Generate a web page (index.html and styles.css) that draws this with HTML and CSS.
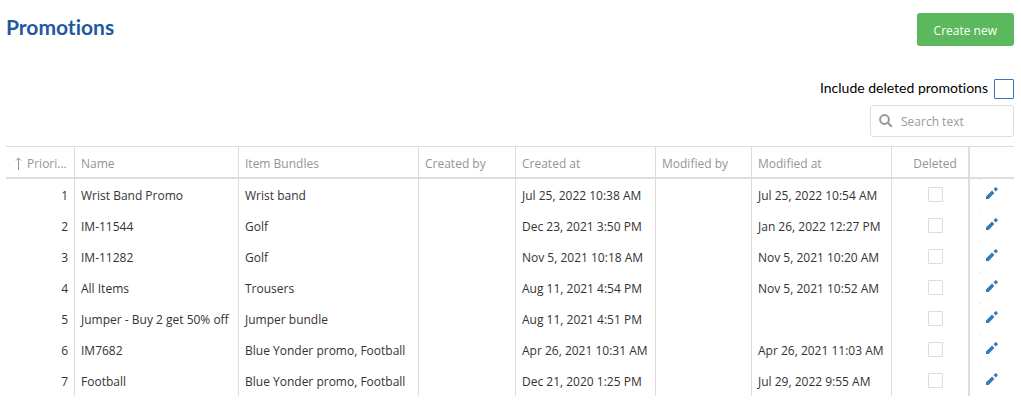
FILE: index.html
```html
<!DOCTYPE html>
<html lang="en">
<head>
    <meta charset="UTF-8">
    <meta name="viewport" content="width=device-width, initial-scale=1.0">
    <title>Promotions</title>
    <link rel="stylesheet" href="styles.css">
</head>
<body>
    <!-- Shared icons -->
    <svg class="icon-defs" width="0" height="0" aria-hidden="true">
        <symbol id="pencil" viewBox="0 0 12 12">
            <path d="M0 12V9.4L6 3.6L8.4 6L2.6 12Z M7.6 2.2L9.4 0.3Q9.8 0 10.2 0.3L11.7 1.8Q12 2.2 11.7 2.6L9.8 4.4Z"/>
        </symbol>
    </svg>

    <div class="header">
        <h1>Promotions</h1>
        <button class="button" type="button">Create new</button>
    </div>

    <div class="toolbar">
        <label class="include-deleted">
            Include deleted promotions
            <input type="checkbox" class="filter-checkbox">
        </label>
        <div class="search-box">
            <svg class="search-icon" viewBox="0 0 14 14" aria-hidden="true">
                <circle cx="5.5" cy="5.5" r="4.4"/>
                <path d="M8.8 8.8L12.8 12.8"/>
            </svg>
            <input type="text" class="search-input" placeholder="Search text" aria-label="Search text">
        </div>
    </div>

    <table class="grid">
        <colgroup>
            <col class="col-priority">
            <col class="col-name">
            <col class="col-bundles">
            <col class="col-user">
            <col class="col-date">
            <col class="col-user-modified">
            <col class="col-date">
            <col class="col-deleted">
            <col class="col-actions">
        </colgroup>
        <thead>
            <tr>
                <th class="priority">
                    <div class="sorted">
                        <svg class="sort-icon" viewBox="0 0 7 13" aria-hidden="true"><path d="M3.5 13V1M1 3.5L3.5 1L6 3.5"/></svg>
                        <span>Priori...</span>
                    </div>
                </th>
                <th>Name</th>
                <th>Item Bundles</th>
                <th>Created by</th>
                <th>Created at</th>
                <th>Modified by</th>
                <th>Modified at</th>
                <th class="deleted">Deleted</th>
                <th class="actions"></th>
            </tr>
        </thead>
        <tbody>
            <tr>
                <td class="priority">1</td>
                <td>Wrist Band Promo</td>
                <td>Wrist band</td>
                <td></td>
                <td>Jul 25, 2022 10:38 AM</td>
                <td></td>
                <td>Jul 25, 2022 10:54 AM</td>
                <td class="deleted"><input type="checkbox" class="row-checkbox" aria-label="Deleted"></td>
                <td class="actions"><button class="edit" type="button" aria-label="Edit"><svg><use href="#pencil"/></svg></button></td>
            </tr>
            <tr>
                <td class="priority">2</td>
                <td>IM-11544</td>
                <td>Golf</td>
                <td></td>
                <td>Dec 23, 2021 3:50 PM</td>
                <td></td>
                <td>Jan 26, 2022 12:27 PM</td>
                <td class="deleted"><input type="checkbox" class="row-checkbox" aria-label="Deleted"></td>
                <td class="actions"><button class="edit" type="button" aria-label="Edit"><svg><use href="#pencil"/></svg></button></td>
            </tr>
            <tr>
                <td class="priority">3</td>
                <td>IM-11282</td>
                <td>Golf</td>
                <td></td>
                <td>Nov 5, 2021 10:18 AM</td>
                <td></td>
                <td>Nov 5, 2021 10:20 AM</td>
                <td class="deleted"><input type="checkbox" class="row-checkbox" aria-label="Deleted"></td>
                <td class="actions"><button class="edit" type="button" aria-label="Edit"><svg><use href="#pencil"/></svg></button></td>
            </tr>
            <tr>
                <td class="priority">4</td>
                <td>All Items</td>
                <td>Trousers</td>
                <td></td>
                <td>Aug 11, 2021 4:54 PM</td>
                <td></td>
                <td>Nov 5, 2021 10:52 AM</td>
                <td class="deleted"><input type="checkbox" class="row-checkbox" aria-label="Deleted"></td>
                <td class="actions"><button class="edit" type="button" aria-label="Edit"><svg><use href="#pencil"/></svg></button></td>
            </tr>
            <tr>
                <td class="priority">5</td>
                <td>Jumper - Buy 2 get 50% off</td>
                <td>Jumper bundle</td>
                <td></td>
                <td>Aug 11, 2021 4:51 PM</td>
                <td></td>
                <td></td>
                <td class="deleted"><input type="checkbox" class="row-checkbox" aria-label="Deleted"></td>
                <td class="actions"><button class="edit" type="button" aria-label="Edit"><svg><use href="#pencil"/></svg></button></td>
            </tr>
            <tr>
                <td class="priority">6</td>
                <td>IM7682</td>
                <td>Blue Yonder promo, Football</td>
                <td></td>
                <td>Apr 26, 2021 10:31 AM</td>
                <td></td>
                <td>Apr 26, 2021 11:03 AM</td>
                <td class="deleted"><input type="checkbox" class="row-checkbox" aria-label="Deleted"></td>
                <td class="actions"><button class="edit" type="button" aria-label="Edit"><svg><use href="#pencil"/></svg></button></td>
            </tr>
            <tr>
                <td class="priority">7</td>
                <td>Football</td>
                <td>Blue Yonder promo, Football</td>
                <td></td>
                <td>Dec 21, 2020 1:25 PM</td>
                <td></td>
                <td>Jul 29, 2022 9:55 AM</td>
                <td class="deleted"><input type="checkbox" class="row-checkbox" aria-label="Deleted"></td>
                <td class="actions"><button class="edit" type="button" aria-label="Edit"><svg><use href="#pencil"/></svg></button></td>
            </tr>
        </tbody>
    </table>
</body>
</html>
```
FILE: styles.css
```css
* {
    margin: 0;
    padding: 0;
    box-sizing: border-box;
}

body {
    font-family: "Segoe UI", "Open Sans", "Noto Sans", sans-serif;
    font-size: 12px;
    color: #333;
    background: #fff;
    padding: 13px 7px 6px 6px;
}

.icon-defs {
    position: absolute;
}

.header {
    display: flex;
    justify-content: space-between;
    align-items: flex-start;
}

.header h1 {
    font-family: Lato, sans-serif;
    font-size: 21px;
    line-height: 28px;
    font-weight: 700;
    font-variant-ligatures: none;
    color: #1f5a9e;
}

.button {
    background: #5cb85c;
    color: #fff;
    border: none;
    border-radius: 3px;
    padding: 9px 17px 7px;
    font-family: inherit;
    font-size: 12px;
    line-height: 17px;
    cursor: pointer;
}

.toolbar {
    display: flex;
    flex-direction: column;
    align-items: flex-end;
    gap: 6px;
    margin: 33px 0 9px;
}

.include-deleted {
    display: flex;
    gap: 6px;
    font-family: Lato, sans-serif;
    font-size: 14px;
    line-height: 18px;
    font-variant-ligatures: none;
    color: #000;
}

.filter-checkbox {
    appearance: none;
    width: 20px;
    height: 20px;
    border: 1px solid #337ab7;
    border-radius: 1px;
    background: #fff;
}

.filter-checkbox:checked {
    background: #337ab7;
}

.search-box {
    display: flex;
    align-items: center;
    gap: 8px;
    width: 144px;
    height: 32px;
    padding: 0 8px;
    border: 1px solid #ddd;
    border-radius: 3px;
}

.search-icon {
    flex: none;
    width: 14px;
    height: 14px;
    fill: none;
    stroke: #999;
    stroke-width: 2;
}

.search-input {
    flex: 1;
    min-width: 0;
    border: none;
    outline: none;
    font-family: inherit;
    font-size: 12px;
    color: #333;
}

.search-input::placeholder {
    color: #999;
}

.grid {
    width: 100%;
    table-layout: fixed;
    border-collapse: separate;
    border-spacing: 0;
    border-top: 1px solid #ddd;
}

.col-priority { width: 69px; }
.col-name { width: 164px; }
.col-bundles { width: 180px; }
.col-user { width: 97px; }
.col-user-modified { width: 96px; }
.col-date { width: 140px; }
.col-deleted { width: 78px; }
.col-actions { width: 44px; }

.grid th,
.grid td {
    height: 31px;
    padding: 2px 6px 0;
    border-right: 1px solid #ddd;
    line-height: 17px;
    text-align: left;
    vertical-align: middle;
    white-space: nowrap;
}

.grid th {
    height: 32px;
    border-bottom: 2px solid #ddd;
    color: #959595;
    font-weight: 400;
}

.grid .priority {
    text-align: right;
}

.sorted {
    display: flex;
    align-items: center;
    gap: 5px;
    padding-left: 3px;
}

.sort-icon {
    flex: none;
    width: 7px;
    height: 13px;
    fill: none;
    stroke: #959595;
}

.grid .deleted {
    padding-left: 16px;
    border-right-width: 2px;
    text-align: center;
}

.grid td.deleted {
    padding-top: 0;
    padding-bottom: 3px;
}

.row-checkbox {
    appearance: none;
    display: inline-block;
    width: 15px;
    height: 15px;
    border: 1px solid #ddd;
    border-radius: 1px;
    vertical-align: middle;
}

.row-checkbox:checked {
    background: #337ab7;
}

.grid .actions {
    border-right: none;
    text-align: center;
}

.grid td.actions {
    padding: 0 7px 6px 6px;
    background: linear-gradient(#ddd, #ddd) 9px 0 / 1px 1px no-repeat;
}

.edit {
    display: inline-flex;
    border: none;
    background: none;
    vertical-align: middle;
    cursor: pointer;
}

.edit svg {
    width: 12px;
    height: 12px;
    fill: #337ab7;
}
```
